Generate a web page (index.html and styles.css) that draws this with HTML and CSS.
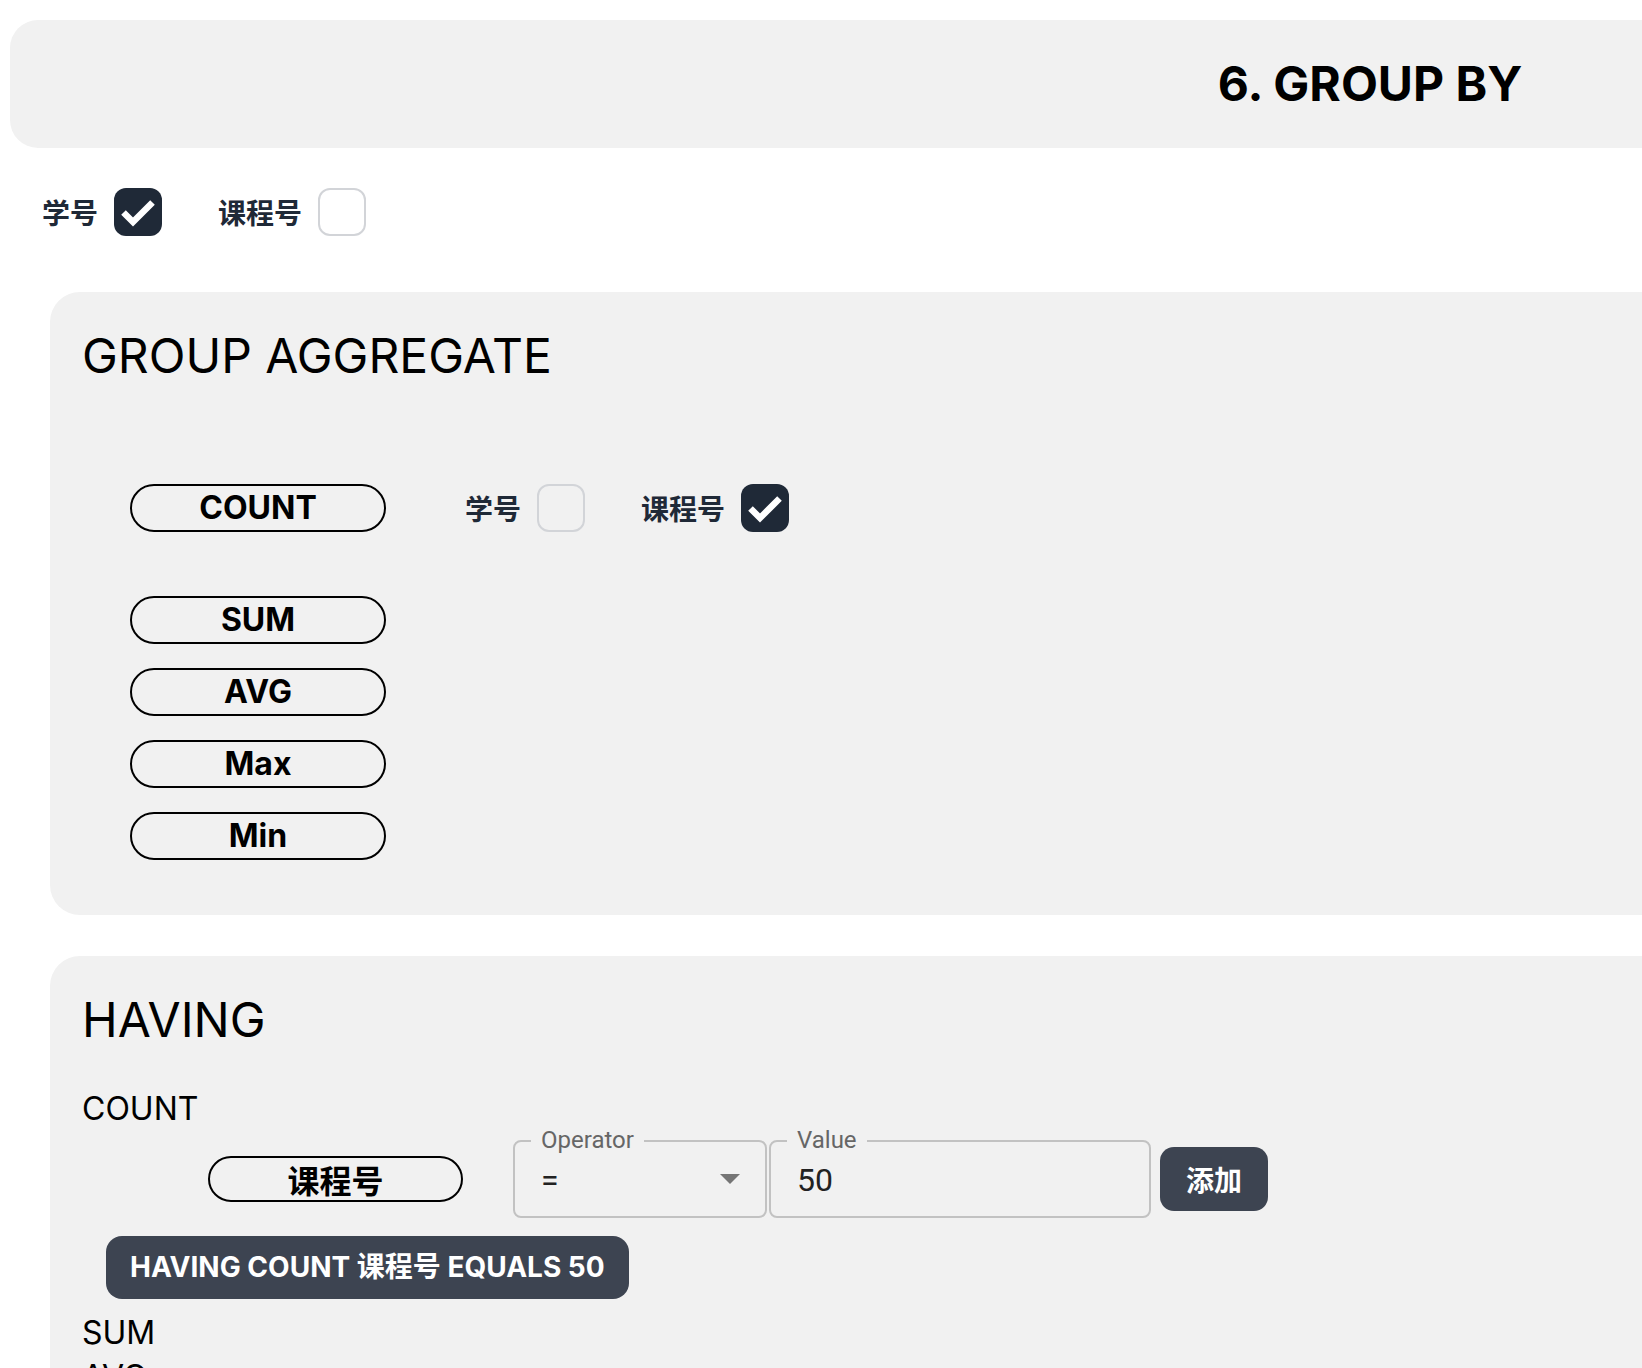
FILE: index.html
```html
<!DOCTYPE html>
<html lang="zh">
<head>
<meta charset="utf-8">
<title>GROUP BY</title>
<link rel="stylesheet" href="styles.css">
</head>
<body>
<div class="page">
  <header class="hero"><h1 class="hero-title">6. GROUP BY</h1></header>

  <div class="checks top-checks">
    <label class="check"><span class="check-label">学号</span><span class="box box-on"><svg viewBox="0 0 48 48" width="48" height="48"><path d="M9.5 24.5 L19 34 L38.5 14.5" fill="none" stroke="#fff" stroke-width="6.5"/></svg></span></label>
    <label class="check"><span class="check-label">课程号</span><span class="box box-off box-white"></span></label>
  </div>

  <section class="card agg-card">
    <h2 class="card-title">GROUP AGGREGATE</h2>
    <div class="agg-list">
      <div class="agg-row">
        <button class="pill">COUNT</button>
        <div class="checks">
          <label class="check"><span class="check-label">学号</span><span class="box box-off"></span></label>
          <label class="check"><span class="check-label">课程号</span><span class="box box-on"><svg viewBox="0 0 48 48" width="48" height="48"><path d="M9.5 24.5 L19 34 L38.5 14.5" fill="none" stroke="#fff" stroke-width="6.5"/></svg></span></label>
        </div>
      </div>
      <div class="pill-stack">
        <button class="pill">SUM</button>
        <button class="pill">AVG</button>
        <button class="pill">Max</button>
        <button class="pill">Min</button>
      </div>
    </div>
  </section>

  <section class="card having-card">
    <h2 class="card-title">HAVING</h2>
    <div class="having-group">
      <div class="agg-label">COUNT</div>
      <div class="cond-row">
        <button class="pill pill-col">课程号</button>
        <div class="field field-op">
          <span class="field-label">Operator</span>
          <span class="field-value">=</span>
          <svg class="arrow" viewBox="0 0 20 10" width="20" height="10"><polygon points="0,0 20,0 10,10" fill="#757575"/></svg>
        </div>
        <div class="field field-val">
          <span class="field-label">Value</span>
          <span class="field-value">50</span>
        </div>
        <button class="btn">添加</button>
      </div>
      <div class="chip">HAVING COUNT 课程号 EQUALS 50</div>
    </div>
    <div class="agg-label">SUM</div>
    <div class="agg-label">AVG</div>
    <div class="agg-label">MAX</div>
    <div class="agg-label">MIN</div>
  </section>
</div>
</body>
</html>
```
FILE: styles.css
```css
html, body {
  margin: 0;
  padding: 0;
  overflow: hidden;
  background: #ffffff;
}

body {
  font-family: "Inter", "Noto Sans CJK SC", sans-serif;
  color: #000;
}

.page {
  padding: 20px 0 0 10px;
}

.hero {
  width: 2720px;
  height: 128px;
  background: #f1f1f1;
  border-radius: 28px;
  display: flex;
  align-items: center;
  justify-content: center;
}

.hero-title {
  margin: 0;
  font-size: 48px;
  font-weight: 700;
  line-height: 1;
  color: #000;
}

.checks {
  display: flex;
  align-items: center;
  gap: 56px;
}

.top-checks {
  margin: 40px 0 0 32px;
  height: 48px;
}

.check {
  display: flex;
  align-items: center;
  gap: 16px;
}

.check-label {
  font-family: "Noto Sans CJK SC", sans-serif;
  font-size: 28px;
  font-weight: 700;
  color: #1f2937;
  line-height: 1;
}

.box {
  width: 48px;
  height: 48px;
  box-sizing: border-box;
  border-radius: 12px;
  display: block;
}

.box svg {
  display: block;
}

.box-on {
  background: #1f2937;
}

.box-off {
  border: 2px solid #d2d4d8;
}

.box-white {
  background: #fff;
}

.card {
  width: 1700px;
  margin-left: 40px;
  background: #f1f1f1;
  border-radius: 30px;
  box-sizing: border-box;
  padding: 32px;
}

.agg-card {
  margin-top: 56px;
  padding-bottom: 55px;
}

.having-card {
  margin-top: 41px;
}

.card-title {
  margin: 0;
  font-size: 48px;
  font-weight: 400;
  line-height: 1.35;
  color: #000;
}

.agg-list {
  margin: 95px 0 0 48px;
}

.agg-row {
  display: flex;
  align-items: center;
  gap: 79px;
}

.pill-stack {
  margin-top: 64px;
  display: flex;
  flex-direction: column;
  gap: 24px;
}

.pill {
  width: 256px;
  height: 48px;
  box-sizing: border-box;
  border: 2px solid #000;
  border-radius: 24px;
  background: transparent;
  font-family: "Inter", "Noto Sans CJK SC", sans-serif;
  font-size: 32px;
  font-weight: 700;
  color: #000;
  padding: 0;
  display: flex;
  align-items: center;
  justify-content: center;
  line-height: 1;
}

.pill-col {
  width: 255px;
  height: 46px;
  font-family: "Noto Sans CJK SC", sans-serif;
  font-size: 32px;
}

.agg-label {
  font-size: 32px;
  line-height: 44px;
  font-weight: 400;
  color: #000;
}

.having-group .agg-label {
  margin-top: 34px;
}

.cond-row {
  margin: 9px 0 0 126px;
  display: flex;
  align-items: center;
}

.field {
  position: relative;
  height: 78px;
  box-sizing: border-box;
  border: 2px solid #c2c2c2;
  border-radius: 8px;
  display: flex;
  align-items: center;
  padding-left: 26px;
  font-family: "Roboto", sans-serif;
}

.field-op {
  width: 254px;
  margin-left: 50px;
  padding-right: 25px;
}

.field-val {
  width: 382px;
  margin-left: 2px;
}

.field-label {
  position: absolute;
  left: 16px;
  top: -16px;
  padding: 0 10px;
  background: #f1f1f1;
  font-size: 24px;
  line-height: 28px;
  color: #666;
}

.field-value {
  font-size: 32px;
  color: #222;
  line-height: 1;
  padding-top: 2px;
}

.arrow {
  margin-left: auto;
  display: block;
}

.btn {
  margin-left: 9px;
  width: 108px;
  height: 64px;
  border: none;
  border-radius: 14px;
  background: #3d4451;
  color: #fff;
  font-family: "Noto Sans CJK SC", sans-serif;
  font-size: 28px;
  font-weight: 700;
  padding: 0;
  line-height: 1;
}

.chip {
  margin: 18px 0 12px 24px;
  display: inline-flex;
  align-items: center;
  height: 63px;
  padding: 0 24px;
  border-radius: 16px;
  background: #3d4451;
  color: #fff;
  font-size: 28px;
  font-weight: 700;
  line-height: 1;
}
```
